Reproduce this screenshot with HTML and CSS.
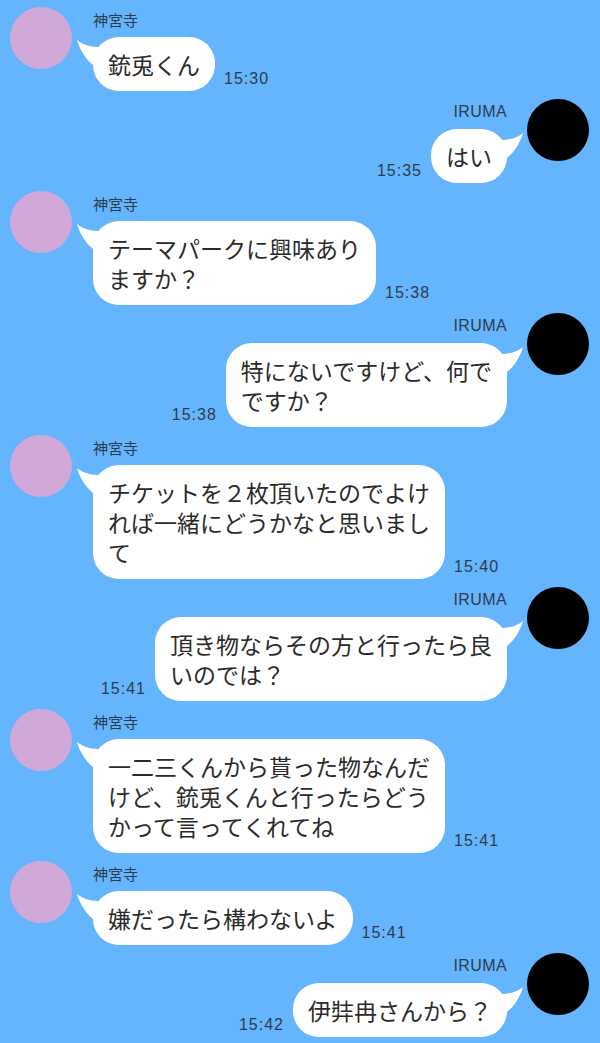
FILE: index.html
```html
<!DOCTYPE html>
<html lang="ja">
<head>
<meta charset="utf-8">
<link rel="stylesheet" href="styles.css">
</head>
<body>
<div class="chat">
  <div class="msg other">
    <div class="avatar"></div>
    <div class="body">
      <div class="name">神宮寺</div>
      <div class="line">
        <div class="bubble"><svg class="tail" viewBox="0 0 22 28"><path d="M0,0 C5,4 12,7 22,7 L22,28 C14,26 4,14 0,0 Z"/></svg>銃兎くん</div>
        <div class="time">15:30</div>
      </div>
    </div>
  </div>
  <div class="msg me">
    <div class="avatar"></div>
    <div class="body">
      <div class="name">IRUMA</div>
      <div class="line">
        <div class="bubble"><svg class="tail" viewBox="0 0 22 28"><path d="M0,0 C5,4 12,7 22,7 L22,28 C14,26 4,14 0,0 Z"/></svg>はい</div>
        <div class="time">15:35</div>
      </div>
    </div>
  </div>
  <div class="msg other">
    <div class="avatar"></div>
    <div class="body">
      <div class="name">神宮寺</div>
      <div class="line">
        <div class="bubble"><svg class="tail" viewBox="0 0 22 28"><path d="M0,0 C5,4 12,7 22,7 L22,28 C14,26 4,14 0,0 Z"/></svg>テーマパークに興味あり<br>ますか？</div>
        <div class="time">15:38</div>
      </div>
    </div>
  </div>
  <div class="msg me">
    <div class="avatar"></div>
    <div class="body">
      <div class="name">IRUMA</div>
      <div class="line">
        <div class="bubble"><svg class="tail" viewBox="0 0 22 28"><path d="M0,0 C5,4 12,7 22,7 L22,28 C14,26 4,14 0,0 Z"/></svg>特にないですけど、何で<br>ですか？</div>
        <div class="time">15:38</div>
      </div>
    </div>
  </div>
  <div class="msg other">
    <div class="avatar"></div>
    <div class="body">
      <div class="name">神宮寺</div>
      <div class="line">
        <div class="bubble"><svg class="tail" viewBox="0 0 22 28"><path d="M0,0 C5,4 12,7 22,7 L22,28 C14,26 4,14 0,0 Z"/></svg>チケットを２枚頂いたのでよけ<br>れば一緒にどうかなと思いまし<br>て</div>
        <div class="time">15:40</div>
      </div>
    </div>
  </div>
  <div class="msg me">
    <div class="avatar"></div>
    <div class="body">
      <div class="name">IRUMA</div>
      <div class="line">
        <div class="bubble"><svg class="tail" viewBox="0 0 22 28"><path d="M0,0 C5,4 12,7 22,7 L22,28 C14,26 4,14 0,0 Z"/></svg>頂き物ならその方と行ったら良<br>いのでは？</div>
        <div class="time">15:41</div>
      </div>
    </div>
  </div>
  <div class="msg other">
    <div class="avatar"></div>
    <div class="body">
      <div class="name">神宮寺</div>
      <div class="line">
        <div class="bubble"><svg class="tail" viewBox="0 0 22 28"><path d="M0,0 C5,4 12,7 22,7 L22,28 C14,26 4,14 0,0 Z"/></svg>一二三くんから貰った物なんだ<br>けど、銃兎くんと行ったらどう<br>かって言ってくれてね</div>
        <div class="time">15:41</div>
      </div>
    </div>
  </div>
  <div class="msg other">
    <div class="avatar"></div>
    <div class="body">
      <div class="name">神宮寺</div>
      <div class="line">
        <div class="bubble"><svg class="tail" viewBox="0 0 22 28"><path d="M0,0 C5,4 12,7 22,7 L22,28 C14,26 4,14 0,0 Z"/></svg>嫌だったら構わないよ</div>
        <div class="time">15:41</div>
      </div>
    </div>
  </div>
  <div class="msg me">
    <div class="avatar"></div>
    <div class="body">
      <div class="name">IRUMA</div>
      <div class="line">
        <div class="bubble"><svg class="tail" viewBox="0 0 22 28"><path d="M0,0 C5,4 12,7 22,7 L22,28 C14,26 4,14 0,0 Z"/></svg>伊弉冉さんから？</div>
        <div class="time">15:42</div>
      </div>
    </div>
  </div>
</div>
</body>
</html>
```
FILE: styles.css
```css
html, body {
  margin: 0;
  padding: 0;
  background: #64b4fe;
  height: 100%;
  overflow: hidden;
}
.chat {
  display: flex;
  flex-direction: column;
  gap: 8px;
  padding-top: 7px;
  font-family: "Noto Sans CJK JP", "Noto Sans", sans-serif;
}
.msg {
  display: flex;
  align-items: flex-start;
  gap: 21px;
  padding: 0 10px;
}
.msg.me {
  flex-direction: row-reverse;
  gap: 20px;
  padding: 0 11px 0 10px;
}
.avatar {
  width: 62px;
  height: 62px;
  border-radius: 50%;
  flex-shrink: 0;
  background: #d0a9d9;
}
.me .avatar {
  background: #000;
}
.body {
  display: flex;
  flex-direction: column;
  align-items: flex-start;
}
.me .body {
  align-items: flex-end;
}
.name {
  margin-top: 3px;
  font-size: 15px;
  line-height: 20px;
  color: #2f3d4b;
}
.me .name {
  font-family: "Liberation Sans", Arial, sans-serif;
  font-size: 16px;
  letter-spacing: 0.4px;
}
.line {
  display: flex;
  align-items: flex-end;
  gap: 9px;
  margin-top: 7px;
}
.me .line {
  flex-direction: row-reverse;
}
.bubble {
  position: relative;
  background: #fff;
  border-radius: 26px;
  padding: 12px 15px;
  font-size: 23px;
  line-height: 30px;
  color: #2b2b2b;
  white-space: nowrap;
}
.tail {
  position: absolute;
  left: -16px;
  top: 3px;
  width: 22px;
  height: 28px;
  fill: #fff;
}
.me .tail {
  left: auto;
  right: -16px;
  top: 4px;
  transform: scaleX(-1);
}
.time {
  font-family: "Liberation Sans", Arial, sans-serif;
  font-size: 16px;
  line-height: 16px;
  letter-spacing: 1px;
  color: #2f3d4b;
  margin-bottom: 4px;
}
```
